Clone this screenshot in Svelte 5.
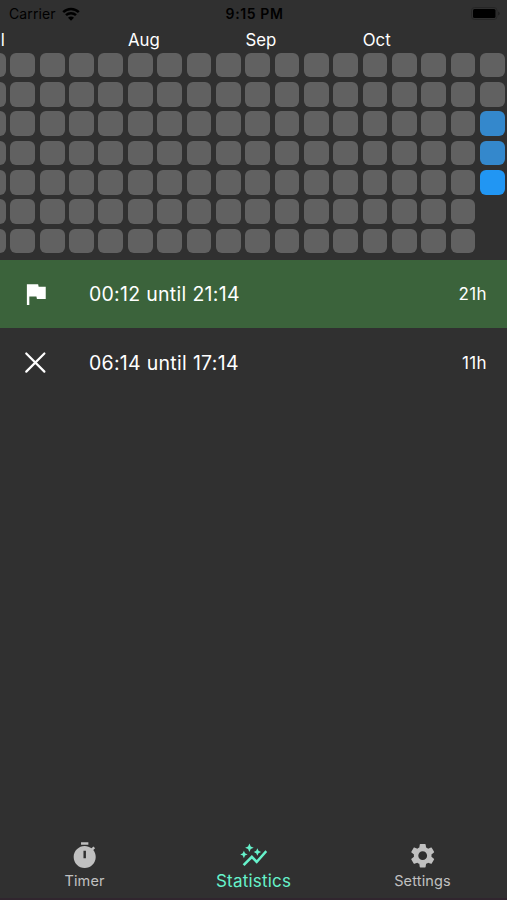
<script>
	const weeks = 18;
	const days = 7;

	// Most recent week is the last column, it ends on today
	const lastWeek = ['', '', 'medium', 'medium', 'full'];

	const months = [
		{ name: 'Jul', column: 1 },
		{ name: 'Aug', column: 6 },
		{ name: 'Sep', column: 10 },
		{ name: 'Oct', column: 14 }
	];

	const fasts = [
		{ range: '00:12 until 21:14', hours: '21h', reached: true },
		{ range: '06:14 until 17:14', hours: '11h', reached: false }
	];

	const tabs = [
		{
			name: 'Timer',
			icon: 'M9 1h6v2H9zM19.03 7.39l1.42-1.42c-.43-.51-.9-.99-1.41-1.41l-1.42 1.42C16.07 4.74 14.12 4 12 4c-4.97 0-9 4.03-9 9s4.02 9 9 9 9-4.03 9-9c0-2.12-.74-4.07-1.97-5.61zM13 14h-2V8h2v6z'
		},
		{
			name: 'Statistics',
			icon: 'M14.06 9.94L12 9l2.06-.94L15 6l.94 2.06L18 9l-2.06.94L15 12l-.94-2.06zM4 14l.94-2.06L7 11l-2.06-.94L4 8l-.94 2.06L1 11l2.06.94L4 14zm4.5-5l1.09-2.41L12 5.5 9.59 4.41 8.5 2 7.41 4.41 5 5.5l2.41 1.09L8.5 9zm-4 11.5l6-6.01 4 4L23 8.93l-1.41-1.41-7.09 7.97-4-4L3 19l1.5 1.5z'
		},
		{
			name: 'Settings',
			icon: 'M19.14 12.94c.04-.3.06-.61.06-.94 0-.32-.02-.64-.07-.94l2.03-1.58c.18-.14.23-.41.12-.61l-1.92-3.32c-.12-.22-.37-.29-.59-.22l-2.39.96c-.5-.38-1.03-.7-1.62-.94l-.36-2.54c-.04-.24-.24-.41-.48-.41h-3.84c-.24 0-.43.17-.47.41l-.36 2.54c-.59.24-1.13.57-1.62.94l-2.39-.96c-.22-.08-.47 0-.59.22L2.74 8.87c-.12.21-.08.47.12.61l2.03 1.58c-.05.3-.09.63-.09.94s.02.64.07.94l-2.03 1.58c-.18.14-.23.41-.12.61l1.92 3.32c.12.22.37.29.59.22l2.39-.96c.5.38 1.03.7 1.62.94l.36 2.54c.05.24.24.41.48.41h3.84c.24 0 .44-.17.47-.41l.36-2.54c.59-.24 1.13-.56 1.62-.94l2.39.96c.22.08.47 0 .59-.22l1.92-3.32c.12-.22.07-.47-.12-.61l-2.01-1.58zM12 15.6c-1.98 0-3.6-1.62-3.6-3.6s1.62-3.6 3.6-3.6 3.6 1.62 3.6 3.6-1.62 3.6-3.6 3.6z'
		}
	];

	let activeTab = $state('Statistics');

	function cellLevel(week, day) {
		if (week < weeks - 1) return '';
		return day < lastWeek.length ? lastWeek[day] : 'future';
	}
</script>

<div class="screen">
	<!-- Status bar -->
	<header class="status-bar">
		<div class="carrier">
			<span>Carrier</span>
			<svg class="wifi" viewBox="0 0 18 14">
				<path d="M1.2 5.1a11.2 11.2 0 0 1 15.6 0M4 8.2a7.2 7.2 0 0 1 10 0" />
				<path class="dot" d="M9 13.8l-3-3.1a4.2 4.2 0 0 1 6 0z" />
			</svg>
		</div>
		<span class="clock">9:15 PM</span>
		<div class="power">
			<svg class="battery" viewBox="0 0 29 13">
				<rect class="frame" x="0.5" y="0.5" width="25.5" height="12" rx="3" />
				<rect x="2" y="2" width="22.5" height="9" rx="1.5" />
				<path class="cap" d="M27 4.5q1.8.6 1.8 2t-1.8 2z" />
			</svg>
		</div>
	</header>

	<!-- Heatmap -->
	<section class="heatmap">
		<div class="months">
			{#each months as month}
				<span class:cut={month.column === 1} style="grid-column-start: {month.column}">{month.name}</span>
			{/each}
		</div>
		<div class="cells">
			{#each Array(weeks) as _, week}
				{#each Array(days) as _, day}
					<div class="slot"><div class="cell {cellLevel(week, day)}"></div></div>
				{/each}
			{/each}
		</div>
	</section>

	<!-- Finished fasts -->
	<ul class="fasts">
		{#each fasts as fast}
			<li class:reached={fast.reached}>
				<svg class="icon" viewBox="0 0 24 24">
					{#if fast.reached}
						<path d="M14.4 5.5L14 3.5H4.8v17h2v-7h5.8l.4 2h7.2v-10z" />
					{:else}
						<path class="cross" d="M4.3 4.5l14.8 14.8M19.1 4.5L4.3 19.3" />
					{/if}
				</svg>
				<span class="range">{fast.range}</span>
				<span class="hours">{fast.hours}</span>
			</li>
		{/each}
	</ul>

	<!-- Bottom navigation -->
	<nav class="tabs">
		{#each tabs as tab}
			<button class:active={activeTab === tab.name} onclick={() => (activeTab = tab.name)}>
				<svg class="icon" viewBox="0 0 24 24"><path d={tab.icon} /></svg>
				<span>{tab.name}</span>
			</button>
		{/each}
	</nav>
</div>

<style>
	:global(body) {
		margin: 0;
		background: #303030;
	}

	.screen {
		--pitch: 29.35px;
		display: flex;
		flex-direction: column;
		box-sizing: border-box;
		width: 507px;
		height: 900px;
		overflow: hidden;
		background: #303030;
		border-bottom: 2px solid #30252e;
		color: #fff;
		font-family: Inter, 'Liberation Sans', sans-serif;
	}

	/* Status bar */
	.status-bar {
		display: grid;
		grid-template-columns: 1fr auto 1fr;
		align-items: center;
		height: 28px;
		padding: 0 7px 0 9px;
		color: #000;
		font-size: 14px;
		line-height: 28px;
	}

	.carrier {
		display: flex;
		align-items: center;
		gap: 6px;
		letter-spacing: 0.1px;
	}

	.wifi {
		width: 18px;
		height: 14px;
		margin-top: -1px;
		fill: none;
		stroke: #000;
		stroke-width: 2.5;
	}

	.wifi .dot {
		fill: #000;
		stroke: none;
	}

	.clock {
		font-weight: 600;
		letter-spacing: 0.6px;
	}

	.power {
		display: flex;
		justify-content: flex-end;
	}

	.battery {
		width: 29px;
		height: 13px;
		margin-top: -1px;
	}

	.battery .frame {
		fill: none;
		stroke: #262626;
	}

	.battery .cap {
		fill: #222;
	}

	/* Heatmap */
	.heatmap {
		flex: none;
		display: flex;
		flex-direction: column;
		align-items: flex-end;
		height: 232px;
	}

	.months,
	.cells {
		display: grid;
		grid-template-columns: repeat(18, var(--pitch));
	}

	.months {
		height: 22.3px;
		font-size: 16.8px;
		line-height: 24px;
	}

	.months span {
		width: 0;
		padding-left: 2.5px;
		white-space: nowrap;
	}

	.months .cut {
		display: flex;
		justify-content: flex-end;
		width: 23.4px;
	}

	.cells {
		grid-template-rows: repeat(7, var(--pitch));
		grid-auto-flow: column;
	}

	.slot {
		padding: 2.3px;
	}

	.cell {
		height: 100%;
		border-radius: 6px;
		background: #616161;
	}

	.cell.medium {
		background: #3488cc;
	}

	.cell.full {
		background: #2196f3;
	}

	.cell.future {
		visibility: hidden;
	}

	/* Fasts */
	.fasts {
		flex: 1;
		margin: 0;
		padding: 0;
		list-style: none;
	}

	.fasts li {
		display: flex;
		align-items: center;
		height: 68.4px;
		padding: 0 20px 0 20.5px;
	}

	.fasts li.reached {
		background: #3b633b;
	}

	.icon {
		flex: none;
		width: 29.4px;
		height: 29.4px;
		fill: currentColor;
	}

	.cross {
		fill: none;
		stroke: currentColor;
		stroke-width: 1.8;
		stroke-linecap: round;
	}

	.range {
		flex: 1;
		margin-left: 39px;
		font-size: 19.5px;
		letter-spacing: 0.3px;
	}

	.hours {
		font-size: 17px;
		letter-spacing: 0.4px;
	}

	/* Bottom navigation */
	.tabs {
		display: flex;
		height: 66px;
	}

	.tabs button {
		flex: 1;
		display: flex;
		flex-direction: column;
		align-items: center;
		padding: 9px 0 0;
		border: none;
		background: none;
		color: #c0c0c0;
		font-family: inherit;
		font-size: 14.5px;
		line-height: 22px;
		letter-spacing: 0.15px;
		cursor: pointer;
	}

	.tabs button.active {
		color: #66f2cb;
		font-size: 17px;
		letter-spacing: 0.2px;
	}
</style>
